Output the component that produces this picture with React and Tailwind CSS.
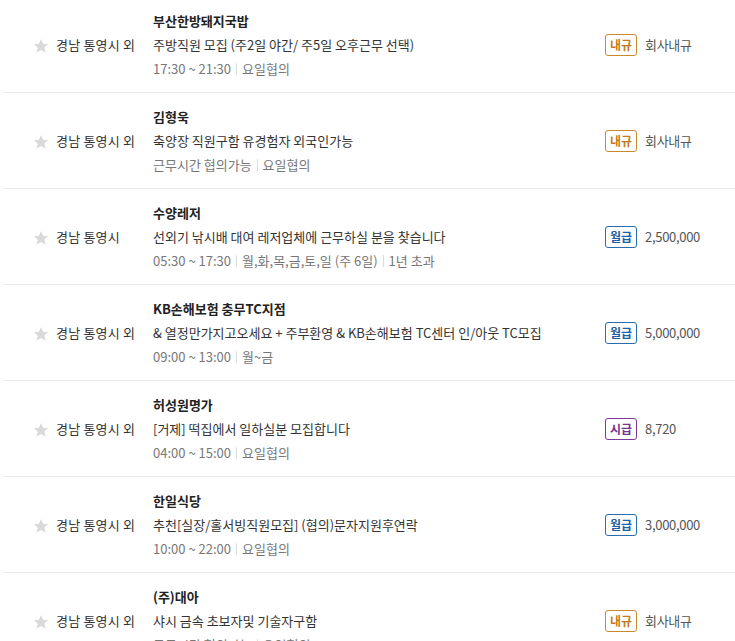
import React from "react";

const jobs = [
  {
    region: "경남 통영시 외",
    title: "부산한방돼지국밥",
    desc: "주방직원 모집 (주2일 야간/ 주5일 오후근무 선택)",
    meta: ["17:30 ~ 21:30", "요일협의"],
    pay: "내규",
    amount: "회사내규",
  },
  {
    region: "경남 통영시 외",
    title: "김형욱",
    desc: "축양장 직원구함 유경험자 외국인가능",
    meta: ["근무시간 협의가능", "요일협의"],
    pay: "내규",
    amount: "회사내규",
  },
  {
    region: "경남 통영시",
    title: "수양레저",
    desc: "선외기 낚시배 대여 레저업체에 근무하실 분을 찾습니다",
    meta: ["05:30 ~ 17:30", "월,화,목,금,토,일 (주 6일)", "1년 초과"],
    pay: "월급",
    amount: "2,500,000",
  },
  {
    region: "경남 통영시 외",
    title: "KB손해보험 충무TC지점",
    desc: "& 열정만가지고오세요 + 주부환영 & KB손해보험 TC센터 인/아웃 TC모집",
    meta: ["09:00 ~ 13:00", "월~금"],
    pay: "월급",
    amount: "5,000,000",
  },
  {
    region: "경남 통영시 외",
    title: "허성원명가",
    desc: "[거제] 떡집에서 일하실분 모집합니다",
    meta: ["04:00 ~ 15:00", "요일협의"],
    pay: "시급",
    amount: "8,720",
  },
  {
    region: "경남 통영시 외",
    title: "한일식당",
    desc: "추천[실장/홀서빙직원모집] (협의)문자지원후연락",
    meta: ["10:00 ~ 22:00", "요일협의"],
    pay: "월급",
    amount: "3,000,000",
  },
  {
    region: "경남 통영시 외",
    title: "(주)대아",
    desc: "샤시 금속 초보자및 기술자구함",
    meta: ["근무시간 협의가능", "요일협의"],
    pay: "내규",
    amount: "회사내규",
  },
];

const badgeStyle = {
  내규: "border-[#c98a2e] text-[#c47a1c]",
  월급: "border-[#2b6cb0] text-[#1c5fa6]",
  시급: "border-[#7d3c98] text-[#76338f]",
};

const Star = () => (
  <svg width="16" height="16" viewBox="0 0 24 24" className="shrink-0 mt-[1px]">
    <polygon
      points="12,1.5 15.1,8.6 22.8,9.3 17,14.4 18.7,22 12,18 5.3,22 7,14.4 1.2,9.3 8.9,8.6"
      fill="#d9d9d9"
    />
  </svg>
);

const JobRow = ({ job }) => (
  <div className="flex items-center border-b border-[#ebebeb] pt-3 pb-[11px]">
    <div className="w-[150px] pl-[30px] flex items-center gap-[7px] text-[13px] text-[#333]">
      <Star />
      <span className="whitespace-nowrap tracking-[0.2px]">{job.region}</span>
    </div>
    <div className="w-[452px] text-[13px] leading-[24px]">
      <div className="font-bold text-[#222]">{job.title}</div>
      <div className="text-[#333] whitespace-nowrap">{job.desc}</div>
      <div className="flex items-center text-[13px] text-[#777] whitespace-nowrap">
        {job.meta.map((m, i) => (
          <React.Fragment key={i}>
            {i > 0 && <span className="mx-[5px] h-[12px] w-px bg-[#dcdcdc]"></span>}
            <span>{m}</span>
          </React.Fragment>
        ))}
      </div>
    </div>
    <div className="flex-1 flex items-center gap-2">
      <span
        className={`h-[22px] w-[32px] flex items-center justify-center border rounded-[3px] text-[12px] font-bold ${badgeStyle[job.pay]}`}
      >
        {job.pay}
      </span>
      <span className="text-[13px] text-[#555] tracking-[-0.3px]">{job.amount}</span>
    </div>
  </div>
);

export default function App() {
  return (
    <div
      className="w-[735px] h-[641px] overflow-hidden bg-white"
      style={{ fontFamily: '"Noto Sans CJK KR", "Noto Sans", sans-serif' }}
    >
      <div className="ml-[3px] -mt-[3px]">
        {jobs.map((job, i) => (
          <JobRow key={i} job={job} />
        ))}
      </div>
    </div>
  );
}
